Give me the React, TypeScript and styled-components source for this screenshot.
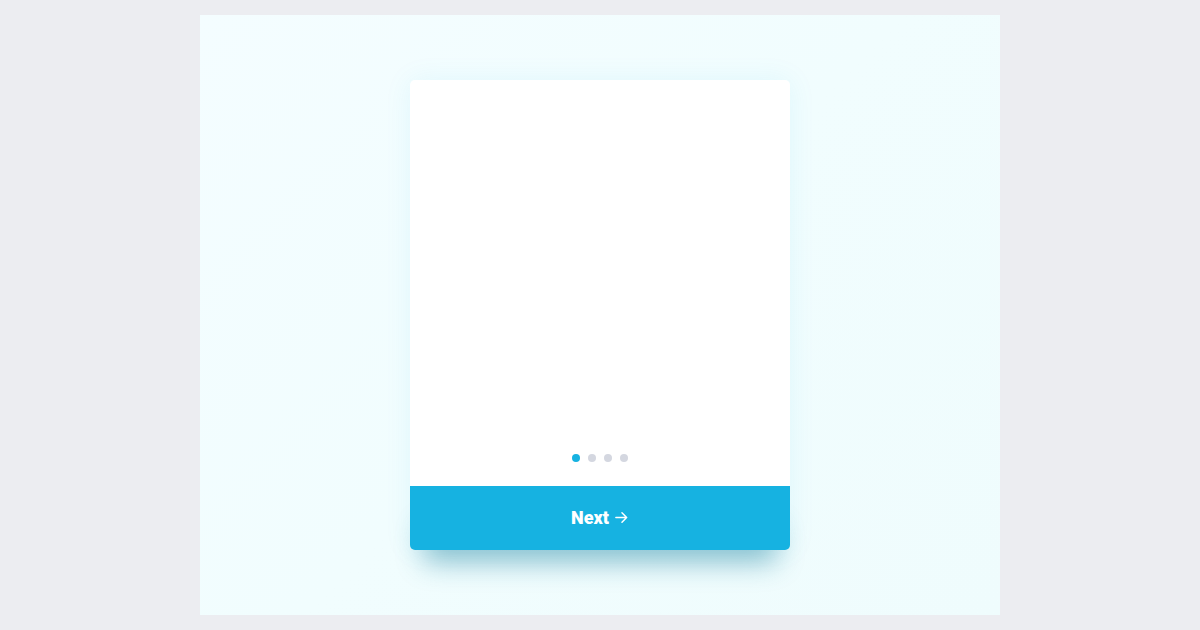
import React, { useState } from 'react';
import styled, { createGlobalStyle } from 'styled-components';

const GlobalStyle = createGlobalStyle`
  html, body {
    margin: 0;
    padding: 0;
    background: #ecedf1;
    font-family: Roboto, "Liberation Sans", sans-serif;
  }
`;

const Page = styled.div`
  width: 1200px;
  height: 630px;
  display: flex;
  justify-content: center;
  padding-top: 15px;
  box-sizing: border-box;
`;

const Stage = styled.div`
  width: 800px;
  height: 600px;
  background: linear-gradient(135deg, #f4fdff 0%, #f1fdfe 50%, #effcfd 100%);
  display: flex;
  align-items: center;
  justify-content: center;
`;

const Card = styled.div`
  width: 380px;
  height: 470px;
  background: #ffffff;
  border-radius: 5px;
  display: flex;
  flex-direction: column;
  box-shadow: 0 0 28px rgba(22, 178, 225, 0.08);
`;

const Slides = styled.div`
  flex: 1;
  display: flex;
  flex-direction: column;
  justify-content: flex-end;
  align-items: center;
  padding-bottom: 24px;
`;

const Dots = styled.div`
  display: flex;
  gap: 8px;
`;

const Dot = styled.span<{ $active: boolean }>`
  width: 8px;
  height: 8px;
  border-radius: 50%;
  background: ${p => (p.$active ? '#16b2e1' : '#d4d7e0')};
`;

const NextButton = styled.button`
  height: 64px;
  border: none;
  border-radius: 0 0 5px 5px;
  background: #16b2e1;
  color: #ffffff;
  font-family: Roboto, "Liberation Sans", sans-serif;
  font-size: 18px;
  font-weight: 900;
  display: flex;
  align-items: center;
  justify-content: center;
  gap: 5px;
  padding: 0 0 2px;
  cursor: pointer;
  box-shadow: 0 26px 28px -14px rgba(10, 120, 150, 0.45);
`;

const Arrow = () => (
  <svg width="15" height="15" viewBox="0 0 16 16" fill="none" stroke="#fff" strokeWidth="1.6" strokeLinecap="round" strokeLinejoin="round">
    <path d="M2 8h11.5M8.5 3l5 5-5 5" />
  </svg>
);

export default function App() {
  const [step, setStep] = useState(0);
  const total = 4;

  return (
    <>
      <GlobalStyle />
      <Page>
        <Stage>
          <Card>
            <Slides>
              <Dots>
                {Array.from({ length: total }).map((_, i) => (
                  <Dot key={i} $active={i === step} />
                ))}
              </Dots>
            </Slides>
            <NextButton onClick={() => setStep((step + 1) % total)}>
              Next <Arrow />
            </NextButton>
          </Card>
        </Stage>
      </Page>
    </>
  );
}
